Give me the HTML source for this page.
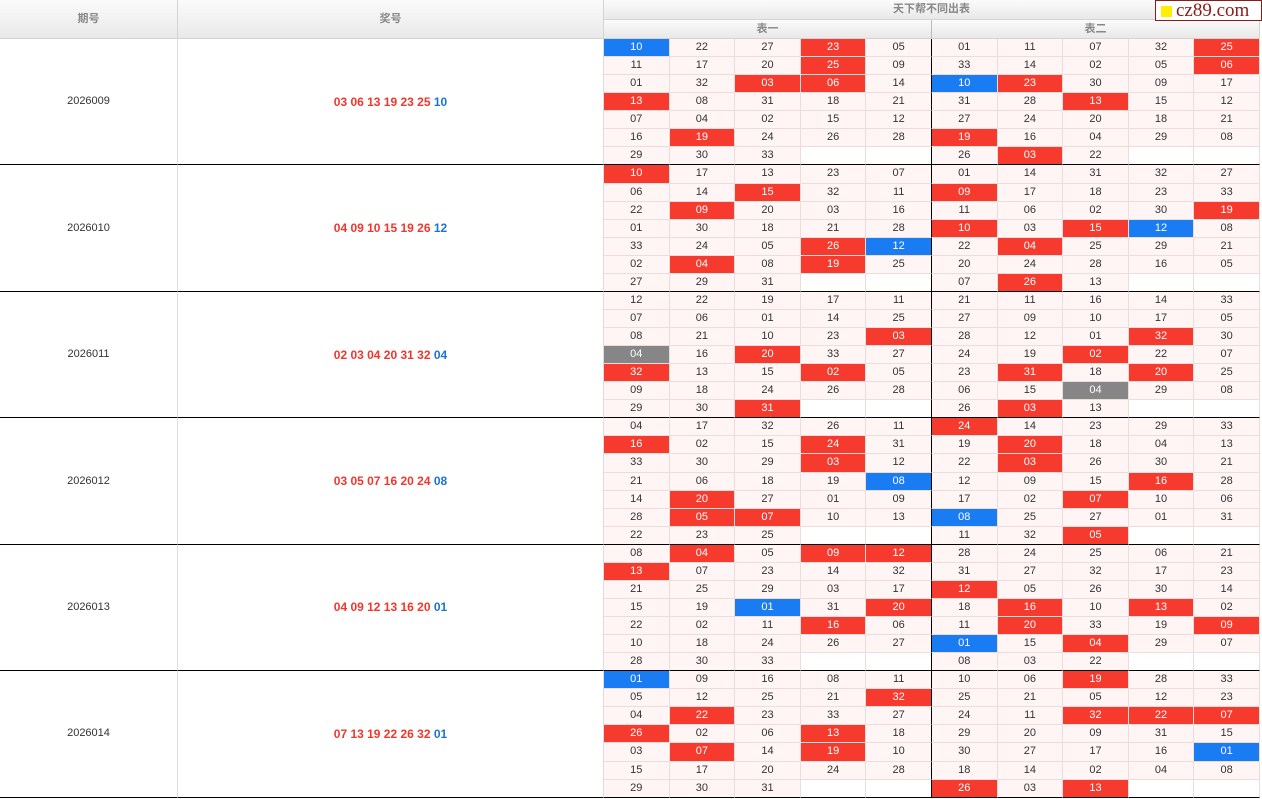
<!DOCTYPE html>
<html><head><meta charset="utf-8"><style>
*{margin:0;padding:0;box-sizing:border-box}
body{width:1262px;height:799px;background:#fff;font-family:"Liberation Sans","Noto Sans CJK SC",sans-serif;font-size:11px;color:#333;overflow:hidden;position:relative}
.g{display:grid;grid-template-columns:178px 426px repeat(10,65.6px);grid-template-rows:20px 19px repeat(42,18.07px);width:1262px}
.g>div{border-right:1px solid #ecdcdc;border-bottom:1px solid #ecdcdc;display:flex;align-items:center;justify-content:center;background:#fff5f4;line-height:1}
.g>div.h{background:linear-gradient(#fbfbfb,#e9e9e9);color:#888;font-weight:bold;border-color:#d4d4d4;font-size:11px}
.g>div.p,.g>div.n{background:#fff;border-color:#ddd;border-bottom:1px solid #000}
.n{font-weight:bold;color:#f3362b;font-size:12px}.n span{color:#1d72d8}
.g>div.r{background:#f73a2e;color:#fff}
.g>div.b{background:#1a7cf2;color:#fff}
.g>div.y{background:#868686;color:#fff}
.g>div.e{background:#fff}
.g>div.k{border-right:1px solid #000}
.g>div.l{border-bottom:1px solid #000}
.logo{position:absolute;left:1155px;top:0;width:107px;height:21px;background:#fff;border:1px solid #8b1a1a;color:#8b1a1a;font-family:"Liberation Serif",serif;font-size:19px;line-height:19px;padding-left:20px}
.logo:before{content:"";position:absolute;left:5px;top:5px;width:11px;height:11px;background:#ffee00}
</style></head><body>
<div class="g">
<div class="h" style="grid-row:1/3;grid-column:1">期号</div>
<div class="h" style="grid-row:1/3;grid-column:2">奖号</div>
<div class="h" style="grid-row:1;grid-column:3/13">天下帮不同出表</div>
<div class="h" style="grid-row:2;grid-column:3/8;border-right:1px solid #bbb">表一</div>
<div class="h" style="grid-row:2;grid-column:8/13">表二</div>

<div class="p" style="grid-row:span 7">2026009</div><div class="n" style="grid-row:span 7">03 06 13 19 23 25&nbsp;<span>10</span></div>
<div class="b">10</div><div>22</div><div>27</div><div class="r">23</div><div class="k">05</div><div>01</div><div>11</div><div>07</div><div>32</div><div class="r">25</div>
<div>11</div><div>17</div><div>20</div><div class="r">25</div><div class="k">09</div><div>33</div><div>14</div><div>02</div><div>05</div><div class="r">06</div>
<div>01</div><div>32</div><div class="r">03</div><div class="r">06</div><div class="k">14</div><div class="b">10</div><div class="r">23</div><div>30</div><div>09</div><div>17</div>
<div class="r">13</div><div>08</div><div>31</div><div>18</div><div class="k">21</div><div>31</div><div>28</div><div class="r">13</div><div>15</div><div>12</div>
<div>07</div><div>04</div><div>02</div><div>15</div><div class="k">12</div><div>27</div><div>24</div><div>20</div><div>18</div><div>21</div>
<div>16</div><div class="r">19</div><div>24</div><div>26</div><div class="k">28</div><div class="r">19</div><div>16</div><div>04</div><div>29</div><div>08</div>
<div class="l">29</div><div class="l">30</div><div class="l">33</div><div class="l e"></div><div class="l e k"></div><div class="l">26</div><div class="l r">03</div><div class="l">22</div><div class="l e"></div><div class="l e"></div>

<div class="p" style="grid-row:span 7">2026010</div><div class="n" style="grid-row:span 7">04 09 10 15 19 26&nbsp;<span>12</span></div>
<div class="r">10</div><div>17</div><div>13</div><div>23</div><div class="k">07</div><div>01</div><div>14</div><div>31</div><div>32</div><div>27</div>
<div>06</div><div>14</div><div class="r">15</div><div>32</div><div class="k">11</div><div class="r">09</div><div>17</div><div>18</div><div>23</div><div>33</div>
<div>22</div><div class="r">09</div><div>20</div><div>03</div><div class="k">16</div><div>11</div><div>06</div><div>02</div><div>30</div><div class="r">19</div>
<div>01</div><div>30</div><div>18</div><div>21</div><div class="k">28</div><div class="r">10</div><div>03</div><div class="r">15</div><div class="b">12</div><div>08</div>
<div>33</div><div>24</div><div>05</div><div class="r">26</div><div class="b k">12</div><div>22</div><div class="r">04</div><div>25</div><div>29</div><div>21</div>
<div>02</div><div class="r">04</div><div>08</div><div class="r">19</div><div class="k">25</div><div>20</div><div>24</div><div>28</div><div>16</div><div>05</div>
<div class="l">27</div><div class="l">29</div><div class="l">31</div><div class="l e"></div><div class="l e k"></div><div class="l">07</div><div class="l r">26</div><div class="l">13</div><div class="l e"></div><div class="l e"></div>

<div class="p" style="grid-row:span 7">2026011</div><div class="n" style="grid-row:span 7">02 03 04 20 31 32&nbsp;<span>04</span></div>
<div>12</div><div>22</div><div>19</div><div>17</div><div class="k">11</div><div>21</div><div>11</div><div>16</div><div>14</div><div>33</div>
<div>07</div><div>06</div><div>01</div><div>14</div><div class="k">25</div><div>27</div><div>09</div><div>10</div><div>17</div><div>05</div>
<div>08</div><div>21</div><div>10</div><div>23</div><div class="r k">03</div><div>28</div><div>12</div><div>01</div><div class="r">32</div><div>30</div>
<div class="y">04</div><div>16</div><div class="r">20</div><div>33</div><div class="k">27</div><div>24</div><div>19</div><div class="r">02</div><div>22</div><div>07</div>
<div class="r">32</div><div>13</div><div>15</div><div class="r">02</div><div class="k">05</div><div>23</div><div class="r">31</div><div>18</div><div class="r">20</div><div>25</div>
<div>09</div><div>18</div><div>24</div><div>26</div><div class="k">28</div><div>06</div><div>15</div><div class="y">04</div><div>29</div><div>08</div>
<div class="l">29</div><div class="l">30</div><div class="l r">31</div><div class="l e"></div><div class="l e k"></div><div class="l">26</div><div class="l r">03</div><div class="l">13</div><div class="l e"></div><div class="l e"></div>

<div class="p" style="grid-row:span 7">2026012</div><div class="n" style="grid-row:span 7">03 05 07 16 20 24&nbsp;<span>08</span></div>
<div>04</div><div>17</div><div>32</div><div>26</div><div class="k">11</div><div class="r">24</div><div>14</div><div>23</div><div>29</div><div>33</div>
<div class="r">16</div><div>02</div><div>15</div><div class="r">24</div><div class="k">31</div><div>19</div><div class="r">20</div><div>18</div><div>04</div><div>13</div>
<div>33</div><div>30</div><div>29</div><div class="r">03</div><div class="k">12</div><div>22</div><div class="r">03</div><div>26</div><div>30</div><div>21</div>
<div>21</div><div>06</div><div>18</div><div>19</div><div class="b k">08</div><div>12</div><div>09</div><div>15</div><div class="r">16</div><div>28</div>
<div>14</div><div class="r">20</div><div>27</div><div>01</div><div class="k">09</div><div>17</div><div>02</div><div class="r">07</div><div>10</div><div>06</div>
<div>28</div><div class="r">05</div><div class="r">07</div><div>10</div><div class="k">13</div><div class="b">08</div><div>25</div><div>27</div><div>01</div><div>31</div>
<div class="l">22</div><div class="l">23</div><div class="l">25</div><div class="l e"></div><div class="l e k"></div><div class="l">11</div><div class="l">32</div><div class="l r">05</div><div class="l e"></div><div class="l e"></div>

<div class="p" style="grid-row:span 7">2026013</div><div class="n" style="grid-row:span 7">04 09 12 13 16 20&nbsp;<span>01</span></div>
<div>08</div><div class="r">04</div><div>05</div><div class="r">09</div><div class="r k">12</div><div>28</div><div>24</div><div>25</div><div>06</div><div>21</div>
<div class="r">13</div><div>07</div><div>23</div><div>14</div><div class="k">32</div><div>31</div><div>27</div><div>32</div><div>17</div><div>23</div>
<div>21</div><div>25</div><div>29</div><div>03</div><div class="k">17</div><div class="r">12</div><div>05</div><div>26</div><div>30</div><div>14</div>
<div>15</div><div>19</div><div class="b">01</div><div>31</div><div class="r k">20</div><div>18</div><div class="r">16</div><div>10</div><div class="r">13</div><div>02</div>
<div>22</div><div>02</div><div>11</div><div class="r">16</div><div class="k">06</div><div>11</div><div class="r">20</div><div>33</div><div>19</div><div class="r">09</div>
<div>10</div><div>18</div><div>24</div><div>26</div><div class="k">27</div><div class="b">01</div><div>15</div><div class="r">04</div><div>29</div><div>07</div>
<div class="l">28</div><div class="l">30</div><div class="l">33</div><div class="l e"></div><div class="l e k"></div><div class="l">08</div><div class="l">03</div><div class="l">22</div><div class="l e"></div><div class="l e"></div>

<div class="p" style="grid-row:span 7">2026014</div><div class="n" style="grid-row:span 7">07 13 19 22 26 32&nbsp;<span>01</span></div>
<div class="b">01</div><div>09</div><div>16</div><div>08</div><div class="k">11</div><div>10</div><div>06</div><div class="r">19</div><div>28</div><div>33</div>
<div>05</div><div>12</div><div>25</div><div>21</div><div class="r k">32</div><div>25</div><div>21</div><div>05</div><div>12</div><div>23</div>
<div>04</div><div class="r">22</div><div>23</div><div>33</div><div class="k">27</div><div>24</div><div>11</div><div class="r">32</div><div class="r">22</div><div class="r">07</div>
<div class="r">26</div><div>02</div><div>06</div><div class="r">13</div><div class="k">18</div><div>29</div><div>20</div><div>09</div><div>31</div><div>15</div>
<div>03</div><div class="r">07</div><div>14</div><div class="r">19</div><div class="k">10</div><div>30</div><div>27</div><div>17</div><div>16</div><div class="b">01</div>
<div>15</div><div>17</div><div>20</div><div>24</div><div class="k">28</div><div>18</div><div>14</div><div>02</div><div>04</div><div>08</div>
<div class="l">29</div><div class="l">30</div><div class="l">31</div><div class="l e"></div><div class="l e k"></div><div class="l r">26</div><div class="l">03</div><div class="l r">13</div><div class="l e"></div><div class="l e"></div>
</div>
<div class="logo">cz89.com</div>
</body></html>
